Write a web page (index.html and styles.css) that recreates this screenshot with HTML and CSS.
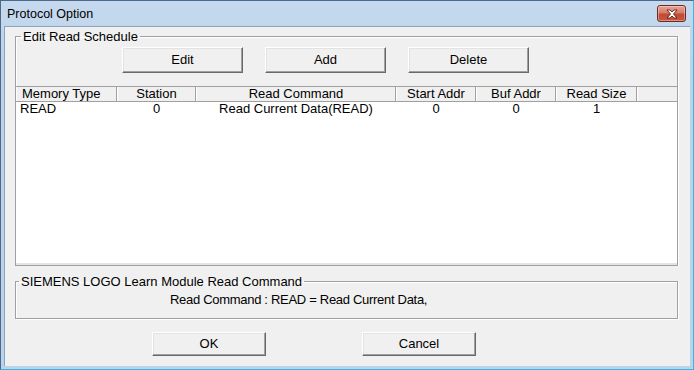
FILE: index.html
```html
<!DOCTYPE html>
<html>
<head>
<meta charset="utf-8">
<link rel="stylesheet" href="styles.css">
</head>
<body>
<div class="window">
  <div class="titlebar">
    <span class="title">Protocol Option</span>
    <div class="close">
      <svg width="14" height="10" viewBox="0 0 14 10">
        <path d="M2 1 L5 1 L7 3 L9 1 L12 1 L8.5 5 L12 9 L9 9 L7 7 L5 9 L2 9 L5.5 5 Z" fill="#fff" stroke="#5a1e18" stroke-width="0.9" stroke-linejoin="round"/>
      </svg>
    </div>
  </div>
  <div class="client">
    <fieldset class="group sched">
      <legend>Edit Read Schedule</legend>
      <div class="btnrow">
        <div class="btn wide">Edit</div>
        <div class="btn wide">Add</div>
        <div class="btn wide">Delete</div>
      </div>
      <div class="listview">
        <div class="lv-header">
          <div class="hcell first">Memory Type</div>
          <div class="hcell">Station</div>
          <div class="hcell">Read Command</div>
          <div class="hcell">Start Addr</div>
          <div class="hcell">Buf Addr</div>
          <div class="hcell">Read Size</div>
          <div class="hcell last"></div>
        </div>
        <div class="lv-row">
          <div class="cell left">READ</div>
          <div class="cell">0</div>
          <div class="cell">Read Current Data(READ)</div>
          <div class="cell">0</div>
          <div class="cell">0</div>
          <div class="cell">1</div>
          <div class="cell"></div>
        </div>
      </div>
    </fieldset>
    <fieldset class="group info">
      <legend>SIEMENS LOGO Learn Module Read Command</legend>
      <div class="info-text">Read Command : READ = Read Current Data,</div>
    </fieldset>
    <div class="footer">
      <div class="btn small">OK</div>
      <div class="btn small">Cancel</div>
    </div>
  </div>
</div>
</body>
</html>
```

FILE: styles.css
```css
* { box-sizing: border-box; }
html, body { margin: 0; padding: 0; background: #fff; }
body {
  font-family: "Liberation Sans", Arial, sans-serif;
  font-size: 13px;
  color: #000;
}
.window {
  width: 694px;
  height: 370px;
  display: flex;
  flex-direction: column;
  background: linear-gradient(#c6d9ee, #bcd2ea 60px, #bcd2ea);
  border: 1px solid #4a6a8c;
  border-right-color: #35b8e2;
  border-bottom-color: #35b8e2;
  padding: 0 3px 3px 3px;
}
.titlebar {
  height: 25px;
  flex: none;
  display: flex;
  align-items: flex-start;
  position: relative;
}
.title {
  font-size: 12.5px;
  margin: 6px 0 0 3px;
  color: #000;
}
.close {
  position: absolute;
  right: 4px;
  top: 4px;
  width: 29px;
  height: 17px;
  border: 1px solid #6e2a22;
  border-radius: 3px;
  background: linear-gradient(#e8a597, #d47a68 45%, #c24a35 55%, #c8553d);
  box-shadow: inset 0 0 0 1px rgba(255,255,255,0.35);
  display: flex;
  align-items: center;
  justify-content: center;
}
.client {
  flex: 1;
  background: #f0f0f0;
  border: 1px solid #8aa3bf;
  border-right: none;
  border-bottom: none;
  padding: 2px 12px 0 10px;
  display: flex;
  flex-direction: column;
}
.group {
  margin: 0;
  padding: 0;
  border: 1px solid #a0a0a0;
  box-shadow: 1px 1px 0 #fff, inset 1px 1px 0 #fff;
  width: 663px;
}
.group legend {
  padding: 0 2px;
  margin-left: 5px;
  line-height: 15px;
  height: 15px;
}
.sched {
  height: 236px;
}
.info legend { margin-left: 3px; }
.btnrow {
  display: flex;
  gap: 22px;
  margin: 3px 0 0 106px;
}
.btn {
  display: flex;
  align-items: center;
  justify-content: center;
  background: #f0f0f0;
  border: 1px solid;
  border-color: #fff #696969 #696969 #fff;
  box-shadow: inset -1px -1px 0 #a0a0a0, inset 1px 1px 0 #e3e3e3;
  font-size: 13px;
  padding-bottom: 2px;
}
.btn.wide { width: 121px; height: 26px; }
.btn.small {
  width: 114px;
  height: 24px;
}
.listview {
  margin: 13px -1px 0 -1px;
  height: 180px;
  background: #fff;
  border: 1px solid #a0a0a0;
  box-shadow: inset 0 -2px 0 #e3e3e3;
}
.lv-header, .lv-row {
  display: grid;
  grid-template-columns: 101px 79px 200px 80px 80px 81px 1fr;
}
.lv-header {
  height: 15px;
  background: #f0f0f0;
  border-bottom: 1px solid #a0a0a0;
}
.hcell {
  text-align: center;
  line-height: 14px;
  border-right: 1px solid #a0a0a0;
  border-left: 1px solid #fff;
  white-space: nowrap;
}
.hcell.first { text-align: left; padding-left: 5px; }
.hcell.last { border-right: none; }
.lv-row { height: 14px; }
.cell {
  text-align: center;
  line-height: 13px;
  white-space: nowrap;
}
.cell.left { text-align: left; padding-left: 4px; }
.info {
  margin-top: 9px;
  height: 45px;
}
.info-text {
  margin: 4px 0 0 154px;
  line-height: 14px;
  letter-spacing: -0.3px;
}
.footer {
  display: flex;
  gap: 96px;
  margin: 13px 0 0 137px;
}
```
